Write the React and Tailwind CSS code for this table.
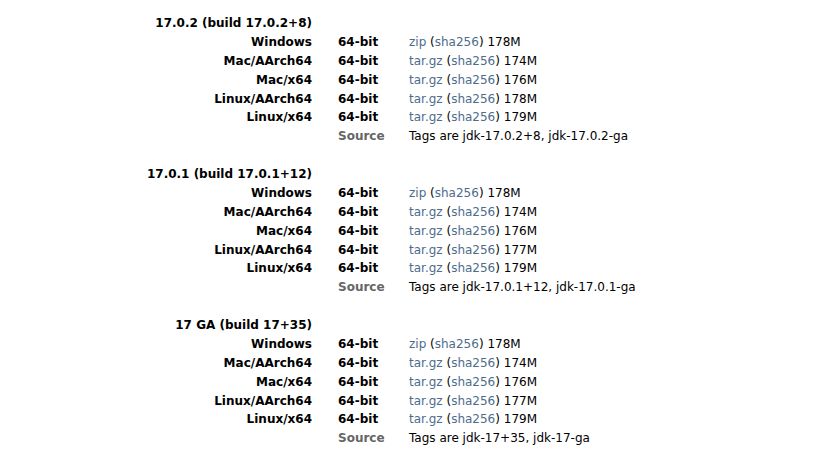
const releases = [
  {
    title: '17.0.2 (build 17.0.2+8)',
    sizes: ['178M', '174M', '176M', '178M', '179M'],
    tags: 'Tags are jdk-17.0.2+8, jdk-17.0.2-ga',
  },
  {
    title: '17.0.1 (build 17.0.1+12)',
    sizes: ['178M', '174M', '176M', '177M', '179M'],
    tags: 'Tags are jdk-17.0.1+12, jdk-17.0.1-ga',
  },
  {
    title: '17 GA (build 17+35)',
    sizes: ['178M', '174M', '176M', '177M', '179M'],
    tags: 'Tags are jdk-17+35, jdk-17-ga',
  },
];

const platforms = [
  { name: 'Windows', kind: 'zip' },
  { name: 'Mac/AArch64', kind: 'tar.gz' },
  { name: 'Mac/x64', kind: 'tar.gz' },
  { name: 'Linux/AArch64', kind: 'tar.gz' },
  { name: 'Linux/x64', kind: 'tar.gz' },
];

const App = () => {
  return (
    <div className="w-[840px] h-[457px] bg-white text-black text-[12px] leading-[18.875px] pt-[14px] overflow-hidden" style={{ fontFamily: '"DejaVu Sans", Verdana, sans-serif' }}>
      {releases.map((r, i) => (
        <div key={r.title} className={i > 0 ? 'mt-[18.875px]' : ''}>
          <div className="flex h-[18.875px] items-center">
            <div className="w-[312px] text-right font-bold whitespace-nowrap">{r.title}</div>
          </div>
          {platforms.map((p, j) => (
            <div key={p.name} className="flex h-[18.875px] items-center">
              <div className="w-[312px] text-right font-bold">{p.name}</div>
              <div className="w-[97px] pl-[26px] font-bold">64-bit</div>
              <div className="whitespace-nowrap">
                <a href="#" className="text-[#4d6c8c]">{p.kind}</a>{' '}
                (<a href="#" className="text-[#4d6c8c]">sha256</a>) {r.sizes[j]}
              </div>
            </div>
          ))}
          <div className="flex h-[18.875px] items-center">
            <div className="w-[312px]" />
            <div className="w-[97px] pl-[26px] font-bold text-[#666666]">Source</div>
            <div className="whitespace-nowrap">{r.tags}</div>
          </div>
        </div>
      ))}
    </div>
  );
};

export default App;
